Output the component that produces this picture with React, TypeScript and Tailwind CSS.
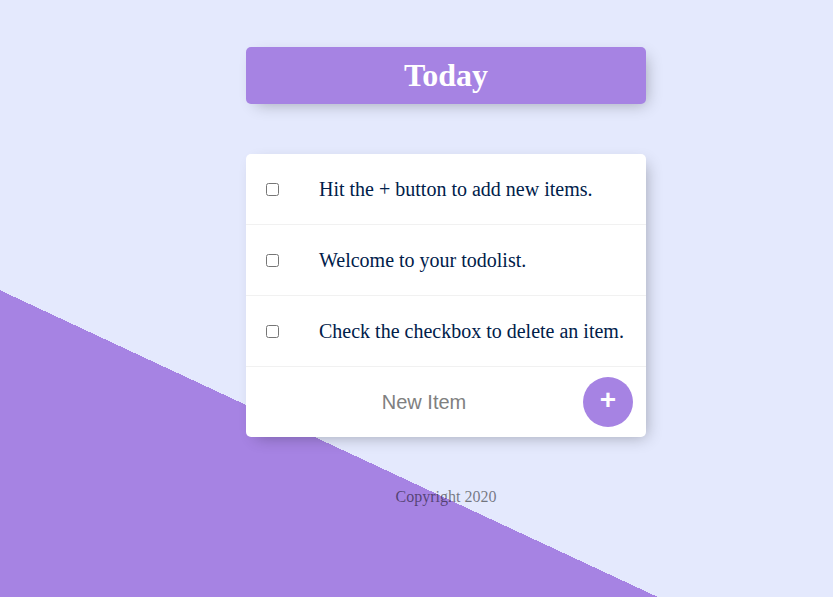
import React, { useState } from "react";

const initialItems = [
  "Hit the + button to add new items.",
  "Welcome to your todolist.",
  "Check the checkbox to delete an item.",
];

export default function App() {
  const [items, setItems] = useState<string[]>(initialItems);
  const [newItem, setNewItem] = useState("");

  const addItem = (e: React.FormEvent) => {
    e.preventDefault();
    const text = newItem.trim();
    if (!text) return;
    setItems([...items, text]);
    setNewItem("");
  };

  return (
    <div className="h-screen overflow-hidden bg-[linear-gradient(25deg,#A683E3_278px,#E4E9FD_278px)] font-['Liberation_Serif',serif]">
      <div className="flex flex-col items-center pl-[59px]">
        {/* Heading */}
        <div className="mt-[47px] w-[400px] rounded-[5px] bg-[#A683E3] shadow-[5px_5px_15px_-5px_rgba(0,0,0,0.3)]">
          <h1 className="py-[10px] text-center text-[32px] font-bold leading-[37px] text-white">
            Today
          </h1>
        </div>

        {/* List */}
        <div className="mt-[50px] w-[400px] rounded-[5px] bg-white shadow-[5px_5px_15px_-5px_rgba(0,0,0,0.3)]">
          {items.map((item, i) => (
            <div
              key={i}
              className="flex min-h-[71px] items-center border-b border-[#F1F1F1]"
            >
              <input
                type="checkbox"
                className="m-5 h-[13px] w-[13px]"
                onChange={() => setItems(items.filter((_, j) => j !== i))}
              />
              <p className="m-0 p-5 text-[20px] leading-[23px] text-[#00204a]">
                {item}
              </p>
            </div>
          ))}

          {/* New item form */}
          <form onSubmit={addItem} className="flex h-[70px] items-center">
            <input
              type="text"
              value={newItem}
              onChange={(e) => setNewItem(e.target.value)}
              placeholder="New Item"
              autoComplete="off"
              className="ml-[21px] h-[60px] w-[314px] border-none text-center font-['Liberation_Sans',sans-serif] text-[20px] text-[#00204a] outline-none placeholder:text-[#808080]"
            />
            <button
              type="submit"
              className="ml-[2px] flex h-[50px] w-[50px] items-center justify-center rounded-full bg-[#A683E3] pb-[4px] font-['Liberation_Sans',sans-serif] text-[28px] font-bold leading-none text-white"
            >
              +
            </button>
          </form>
        </div>

        <footer className="mt-[48px] text-center text-[16px] text-black/50">
          Copyright 2020
        </footer>
      </div>
    </div>
  );
}
